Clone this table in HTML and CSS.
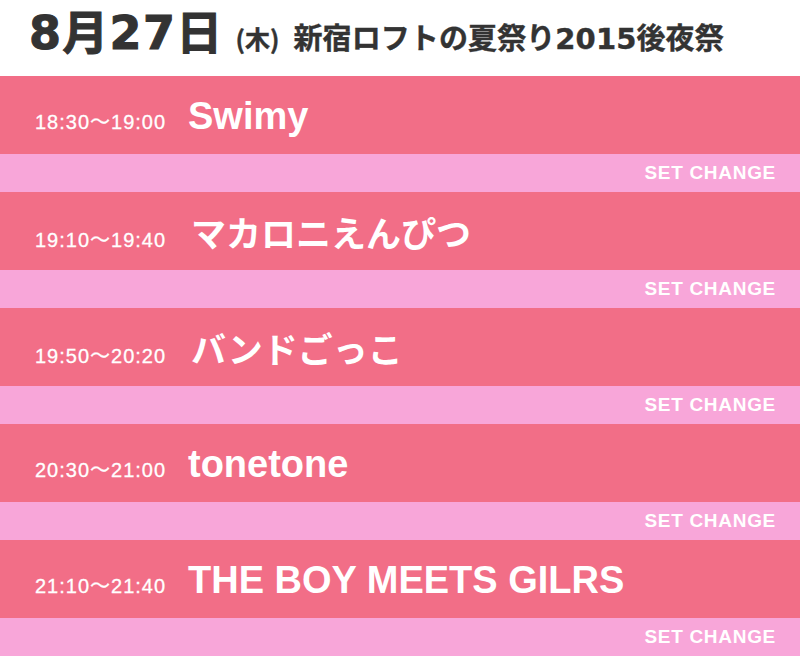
FILE: index.html
```html
<!DOCTYPE html>
<html lang="ja">
<head>
<meta charset="utf-8">
<title>8月27日 タイムテーブル</title>
<link rel="stylesheet" href="styles.css">
</head>
<body>
<header class="head">
  <h1 class="title"><span class="date">8月27日</span><span class="dow">(木)</span><span class="event">新宿ロフトの夏祭り2015後夜祭</span></h1>
</header>
<main class="table">
  <div class="slot"><span class="time">18:30〜19:00</span><span class="name">Swimy</span></div>
  <div class="change">SET CHANGE</div>
  <div class="slot"><span class="time">19:10〜19:40</span><span class="name name-ja">マカロニえんぴつ</span></div>
  <div class="change">SET CHANGE</div>
  <div class="slot"><span class="time">19:50〜20:20</span><span class="name name-ja">バンドごっこ</span></div>
  <div class="change">SET CHANGE</div>
  <div class="slot"><span class="time">20:30〜21:00</span><span class="name">tonetone</span></div>
  <div class="change">SET CHANGE</div>
  <div class="slot"><span class="time">21:10〜21:40</span><span class="name">THE BOY MEETS GILRS</span></div>
  <div class="change">SET CHANGE</div>
</main>
</body>
</html>
```
FILE: styles.css
```css
html, body {
  margin: 0;
  padding: 0;
  background: #ffffff;
}
body {
  width: 800px;
  height: 656px;
  overflow: hidden;
  font-family: "Liberation Sans", "Noto Sans CJK JP", sans-serif;
}
.head {
  height: 76px;
  box-sizing: border-box;
  padding-left: 29px;
  display: flex;
  align-items: flex-start;
}
.title {
  margin: 0;
  height: 76px;
  display: flex;
  align-items: baseline;
  color: #333333;
  font-weight: bold;
  line-height: 66px;
}
.date {
  font-family: "DejaVu Sans", "Noto Sans CJK JP", sans-serif;
  font-size: 46px;
  letter-spacing: 1.3px;
  -webkit-text-stroke: 1px #333333;
}
.dow {
  font-family: "Noto Sans CJK JP", sans-serif;
  font-size: 25px;
  margin-left: 12px;
  -webkit-text-stroke: 0.4px #333333;
}
.event {
  font-family: "DejaVu Sans", "Noto Sans CJK JP", sans-serif;
  font-size: 29px;
  margin-left: 14px;
  letter-spacing: 0.1px;
  -webkit-text-stroke: 0.4px #333333;
}
.table {
  display: flex;
  flex-direction: column;
}
.slot {
  height: 78px;
  background: #f26e87;
  color: #ffffff;
  display: flex;
  align-items: baseline;
  box-sizing: border-box;
  padding-left: 35px;
  padding-top: 20px;
  line-height: 40px;
}
.time {
  width: 153px;
  flex: none;
  font-size: 20px;
  letter-spacing: 1px;
  -webkit-text-stroke: 0.3px #ffffff;
}
.name {
  font-size: 38px;
  font-weight: bold;
}
.name-ja {
  font-family: "Noto Sans CJK JP", sans-serif;
  font-size: 35px;
  margin-left: 3px;
}
.change {
  height: 38px;
  background: #f8a6d9;
  color: #ffffff;
  font-weight: bold;
  font-size: 19px;
  letter-spacing: 0.7px;
  display: flex;
  align-items: center;
  justify-content: flex-end;
  padding-right: 24px;
}
```
